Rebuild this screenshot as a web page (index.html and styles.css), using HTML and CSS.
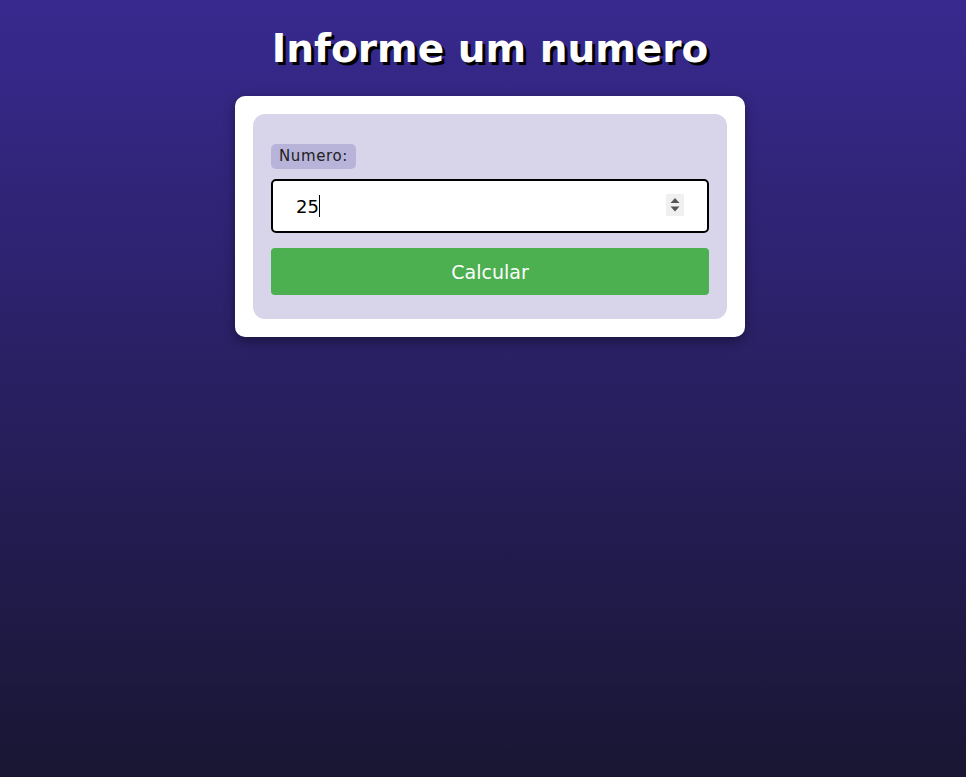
FILE: index.html
```html
<!DOCTYPE html>
<html lang="pt">
<head>
<meta charset="utf-8">
<title>Informe um numero</title>
<link rel="stylesheet" href="styles.css">
</head>
<body>
<div class="page">
  <h1 class="title">Informe um numero</h1>
  <div class="card">
    <form class="panel">
      <label class="label" for="numero">Numero:</label>
      <div class="field-wrap">
        <input class="field" id="numero" type="number" value="25" autofocus>
        <span class="caret" aria-hidden="true"></span>
        <span class="spin" aria-hidden="true">
          <svg width="18" height="22" viewBox="0 0 18 22">
            <path d="M4.5 9 L9 4 L13.5 9 Z" fill="#555"/>
            <path d="M4.5 12.5 L13.5 12.5 L9 17.5 Z" fill="#555"/>
          </svg>
        </span>
      </div>
      <button class="btn" type="button">Calcular</button>
    </form>
  </div>
</div>
</body>
</html>
```
FILE: styles.css
```css
html, body {
  margin: 0;
  height: 100%;
}
body {
  background: linear-gradient(to bottom, #38298f 0%, #191633 100%);
  font-family: "DejaVu Sans", Verdana, sans-serif;
}
.page {
  display: flex;
  flex-direction: column;
  align-items: center;
  padding-left: 14px;
}
.title {
  margin: 26px 0 24px;
  font-size: 39px;
  font-weight: bold;
  color: #fff;
  line-height: 46px;
  text-shadow: 3px 3px 0 #000;
}
.card {
  width: 474px;
  padding: 18px;
  background: #fff;
  border-radius: 10px;
  box-shadow: 0 4px 12px rgba(0, 0, 0, 0.4);
}
.panel {
  display: flex;
  flex-direction: column;
  align-items: flex-start;
  background: #d8d4ea;
  border-radius: 12px;
  padding: 30px 18px 24px;
  margin: 0;
}
.label {
  background: #b8b3d9;
  color: #222;
  font-size: 15px;
  letter-spacing: 0.6px;
  line-height: 25px;
  padding: 0 8px;
  border-radius: 5px;
  margin-bottom: 10px;
}
.field-wrap {
  position: relative;
  width: 100%;
  margin: 0 0 15px;
}
.field {
  box-sizing: border-box;
  display: block;
  width: 100%;
  height: 54px;
  border: 2px solid #000;
  border-radius: 5px;
  padding: 0 50px 0 23px;
  font-family: "DejaVu Sans", Verdana, sans-serif;
  font-size: 18px;
  color: #000;
  background: #fff;
  outline: none;
  margin: 0;
  caret-color: transparent;
  -moz-appearance: textfield;
}
.field::-webkit-inner-spin-button,
.field::-webkit-outer-spin-button {
  -webkit-appearance: none;
  margin: 0;
}
.caret {
  position: absolute;
  left: 48px;
  top: 16px;
  width: 1px;
  height: 22px;
  background: #000;
}
.spin {
  position: absolute;
  right: 25px;
  top: 15px;
  width: 18px;
  height: 22px;
  background: #f0f0f0;
  display: block;
}
.spin svg {
  display: block;
}
.btn {
  width: 100%;
  height: 47px;
  border: none;
  border-radius: 4px;
  background: #4caf50;
  color: #fff;
  font-family: "DejaVu Sans", Verdana, sans-serif;
  font-size: 19px;
  cursor: pointer;
}
```
